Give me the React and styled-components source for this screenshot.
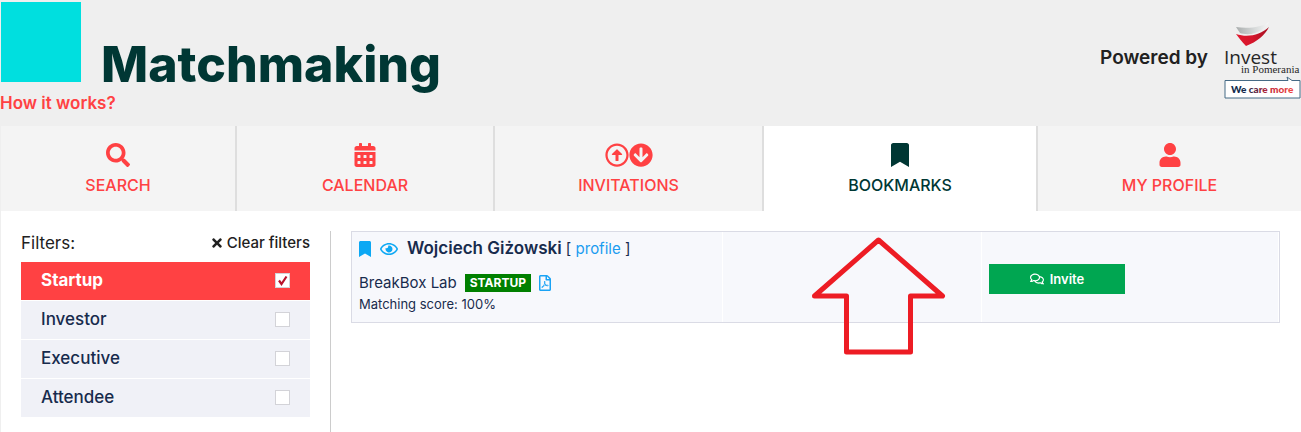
import React, { useState } from 'react';
import styled, { createGlobalStyle, css } from 'styled-components';
import {
  FaSearch,
  FaCalendarAlt,
  FaRegArrowAltCircleUp,
  FaArrowCircleDown,
  FaBookmark,
  FaUser,
  FaTimes,
  FaRegEye,
  FaRegFilePdf,
  FaRegComments,
} from 'react-icons/fa';

const GlobalStyle = createGlobalStyle`
  * {
    box-sizing: border-box;
  }

  body {
    margin: 0;
    background: #fff;
    color: #212121;
    font-family: Inter, 'Open Sans', sans-serif;
    font-size: 16px;
    line-height: 24px;
  }

  a {
    text-decoration: none;
  }

  svg {
    display: block;
  }
`;

const Header = styled.header`
  display: flex;
  justify-content: space-between;
  background: #efefef;
  padding: 2px 0 11px;
`;

const Brand = styled.div`
  display: flex;
  align-items: flex-end;
  gap: 20px;
  padding-left: 1px;
`;

const BrandMark = styled.div`
  width: 80px;
  height: 80px;
  background: #00dfdf;
`;

const Title = styled.h1`
  margin: 0;
  color: #003734;
  font-size: 50px;
  line-height: 36px;
  font-weight: 800;
`;

const HowLink = styled.a`
  display: block;
  margin-top: 9px;
  color: #ff4143;
  font-size: 17px;
  font-weight: 600;
`;

const Powered = styled.div`
  display: flex;
  align-items: flex-start;
  gap: 16px;
  padding-top: 20px;
  color: #212121;
`;

const PoweredText = styled.span`
  padding-top: 24px;
  font-size: 19px;
  font-weight: 600;
`;

const Tabs = styled.nav`
  display: flex;
  border-left: 1px solid #efefef;
`;

const Tab = styled.a`
  flex: ${({ $grow }) => $grow} 1 0;
  display: flex;
  flex-direction: column;
  align-items: center;
  gap: 6px;
  padding: 17px 0 14px;
  background: ${({ $active }) => ($active ? '#fff' : '#f4f4f4')};
  color: ${({ $active }) => ($active ? '#003734' : '#ff4143')};
  border-right: 2px solid #dedede;
  font-weight: 500;

  &:last-child {
    border-right: 0;
  }
`;

const TabIcons = styled.span`
  display: flex;
  font-size: 24px;
`;

const Body = styled.div`
  display: flex;
  gap: 20px;
  padding: 20px 21px 0 20px;
  border-left: 1px solid #efefef;
`;

const Sidebar = styled.aside`
  flex: 0 0 310px;
  min-height: calc(100vh - 231px);
  padding-right: 20px;
  border-right: 1px solid #ccc;
`;

const FilterHead = styled.div`
  display: flex;
  justify-content: space-between;
  align-items: center;
  margin-bottom: 7px;
  font-size: 17px;
`;

const ClearButton = styled.button`
  display: flex;
  align-items: center;
  gap: 3px;
  padding: 0;
  border: 0;
  background: none;
  color: #212121;
  font: inherit;
  font-size: 15px;
  font-weight: 500;
  cursor: pointer;
`;

const FilterRow = styled.label`
  display: flex;
  justify-content: space-between;
  align-items: center;
  margin-bottom: 1px;
  padding: 6px 20px 8px;
  background: #f0f1f7;
  color: #172b4d;
  font-size: 17px;
  font-weight: 500;
  cursor: pointer;

  ${({ $active }) =>
    $active &&
    css`
      background: #ff4143;
      color: #fff;
      font-weight: 700;
    `}
`;

const CheckBox = styled.input`
  appearance: none;
  width: 15px;
  height: 15px;
  margin: 0;
  border: 1px solid #d3d3d8;
  background: #fff;

  &:checked {
    background: #fff
      url("data:image/svg+xml,%3Csvg xmlns='http://www.w3.org/2000/svg' viewBox='0 0 13 13'%3E%3Cpath d='M3 6.5L5.5 10L10.5 2.5' fill='none' stroke='%23b8122b' stroke-width='2.2'/%3E%3C/svg%3E");
  }
`;

const Main = styled.main`
  flex: 1;
  min-width: 0;
`;

const Card = styled.article`
  position: relative;
  display: grid;
  grid-template-columns: 371fr 259fr 297fr;
  border: 1px solid #dadbe5;
  background: #f7f8fc;
  color: #172b4d;
`;

const Cell = styled.div`
  padding: 4px 7px 9px;
  border-right: 1px solid #fff;

  &:last-child {
    border-right: 0;
  }
`;

const PersonLine = styled.div`
  display: flex;
  align-items: center;
  gap: 9px;
  font-size: 15px;
`;

const IconButton = styled.button`
  padding: 0;
  border: 0;
  background: none;
  color: #0ca8f4;
  cursor: pointer;

  svg {
    width: ${({ $width }) => $width}px;
    height: 16px;
  }
`;

const Name = styled.strong`
  font-size: 17px;
  font-weight: 600;
`;

const ProfileLink = styled.a`
  color: #1a9cf0;
`;

const CompanyLine = styled.div`
  display: flex;
  align-items: center;
  gap: 8px;
  margin-top: 10px;
  font-size: 15px;
`;

const Badge = styled.span`
  padding: 0 5px;
  background: #008000;
  color: #fff;
  font-size: 12px;
  line-height: 18px;
  font-weight: 700;
`;

const PdfLink = styled.a`
  color: #1aa3f5;

  svg {
    width: 12px;
    height: 16px;
  }
`;

const Score = styled.div`
  font-size: 13px;
  line-height: 18px;
`;

const ActionCell = styled(Cell)`
  display: flex;
  align-items: center;
  padding-top: 13px;
`;

const InviteButton = styled.button`
  display: flex;
  align-items: center;
  justify-content: center;
  gap: 6px;
  width: 136px;
  height: 30px;
  border: 0;
  background: #00a651;
  color: #fff;
  font: inherit;
  font-size: 13px;
  font-weight: 600;
  cursor: pointer;
`;

const Pointer = styled.svg`
  position: absolute;
  left: 459px;
  top: 4px;
  pointer-events: none;
`;

const tabs = [
  { name: 'SEARCH', grow: 234, icons: [FaSearch] },
  { name: 'CALENDAR', grow: 256, icons: [FaCalendarAlt] },
  { name: 'INVITATIONS', grow: 267, icons: [FaRegArrowAltCircleUp, FaArrowCircleDown] },
  { name: 'BOOKMARKS', grow: 272, icons: [FaBookmark] },
  { name: 'MY PROFILE', grow: 263, icons: [FaUser] },
];

const filters = ['Startup', 'Investor', 'Executive', 'Attendee'];

const InvestLogo = () => (
  <svg width="77" height="78" viewBox="0 0 77 78" role="img" aria-label="Invest in Pomerania">
    <defs>
      <linearGradient id="sail" x1="0" y1="0" x2="1" y2="0">
        <stop offset="0" stopColor="#a9adad" />
        <stop offset="0.6" stopColor="#d9dcdc" />
        <stop offset="1" stopColor="#f7f7f7" />
      </linearGradient>
      <linearGradient id="hull" x1="0" y1="0" x2="1" y2="0">
        <stop offset="0" stopColor="#e2192f" />
        <stop offset="0.5" stopColor="#d5152b" />
        <stop offset="1" stopColor="#a51122" />
      </linearGradient>
      <linearGradient id="more" x1="0" y1="0" x2="1" y2="0">
        <stop offset="0" stopColor="#16284a" />
        <stop offset="0.25" stopColor="#16284a" />
        <stop offset="0.6" stopColor="#c22338" />
        <stop offset="1" stopColor="#f04a43" />
      </linearGradient>
    </defs>
    <path d="M12 5C25 7 38 5 45 0C43 4 38 9 31 11C25 13 19 12 16 11Z" fill="url(#sail)" />
    <path d="M12 12C24 16 36 13 45 5C41 13 33 20 22 24C18 20 15 16 12 12Z" fill="url(#hull)" />
    <text x="0" y="42" fontFamily="'Open Sans', sans-serif" fontSize="19" fill="#262626">
      Invest
    </text>
    <text x="17" y="51" fontFamily="'Liberation Serif', serif" fontSize="11" fill="#262626">
      in Pomerania
    </text>
    <path d="M1 58.5H64L63 55L68 58.5H76V76H1Z" fill="#fff" stroke="#456a85" />
    <text x="7" y="71" fontFamily="Lato, sans-serif" fontSize="10" fontWeight="900" fill="url(#more)">
      We care more
    </text>
  </svg>
);

const App = () => {
  const [selected, setSelected] = useState(['Startup']);

  const toggle = (name) =>
    setSelected(
      selected.includes(name) ? selected.filter((item) => item !== name) : [...selected, name]
    );

  return (
    <>
      <GlobalStyle />
      <Header>
        <div>
          <Brand>
            <BrandMark />
            <Title>Matchmaking</Title>
          </Brand>
          <HowLink href="#how">How it works?</HowLink>
        </div>
        <Powered>
          <PoweredText>Powered by</PoweredText>
          <InvestLogo />
        </Powered>
      </Header>
      <Tabs>
        {tabs.map(({ name, grow, icons }) => (
          <Tab key={name} href="#" $grow={grow} $active={name === 'BOOKMARKS'}>
            <TabIcons>
              {icons.map((Icon, index) => (
                <Icon key={index} />
              ))}
            </TabIcons>
            {name}
          </Tab>
        ))}
      </Tabs>
      <Body>
        <Sidebar>
          <FilterHead>
            <span>Filters:</span>
            <ClearButton type="button" onClick={() => setSelected([])}>
              <FaTimes size={14} />
              Clear filters
            </ClearButton>
          </FilterHead>
          {filters.map((name) => (
            <FilterRow key={name} $active={selected.includes(name)}>
              {name}
              <CheckBox
                type="checkbox"
                checked={selected.includes(name)}
                onChange={() => toggle(name)}
              />
            </FilterRow>
          ))}
        </Sidebar>
        <Main>
          <Card>
            <Cell>
              <PersonLine>
                <IconButton type="button" aria-label="Bookmark" $width={12}>
                  <FaBookmark />
                </IconButton>
                <IconButton type="button" aria-label="View" $width={18}>
                  <FaRegEye />
                </IconButton>
                <span>
                  <Name>Wojciech Giżowski</Name> [ <ProfileLink href="#profile">profile</ProfileLink> ]
                </span>
              </PersonLine>
              <CompanyLine>
                BreakBox Lab
                <Badge>STARTUP</Badge>
                <PdfLink href="#pdf" aria-label="PDF">
                  <FaRegFilePdf />
                </PdfLink>
              </CompanyLine>
              <Score>Matching score: 100%</Score>
            </Cell>
            <Cell />
            <ActionCell>
              <InviteButton type="button">
                <FaRegComments size={14} />
                Invite
              </InviteButton>
            </ActionCell>
            <Pointer width="136" height="120" viewBox="0 0 136 120" aria-hidden="true">
              <path
                d="M67.500 4L131.500 60H99.500V116H35.500V60H3.500Z"
                fill="none"
                stroke="#ed1c24"
                strokeWidth="5"
                strokeLinejoin="round"
              />
            </Pointer>
          </Card>
        </Main>
      </Body>
    </>
  );
};

export default App;
